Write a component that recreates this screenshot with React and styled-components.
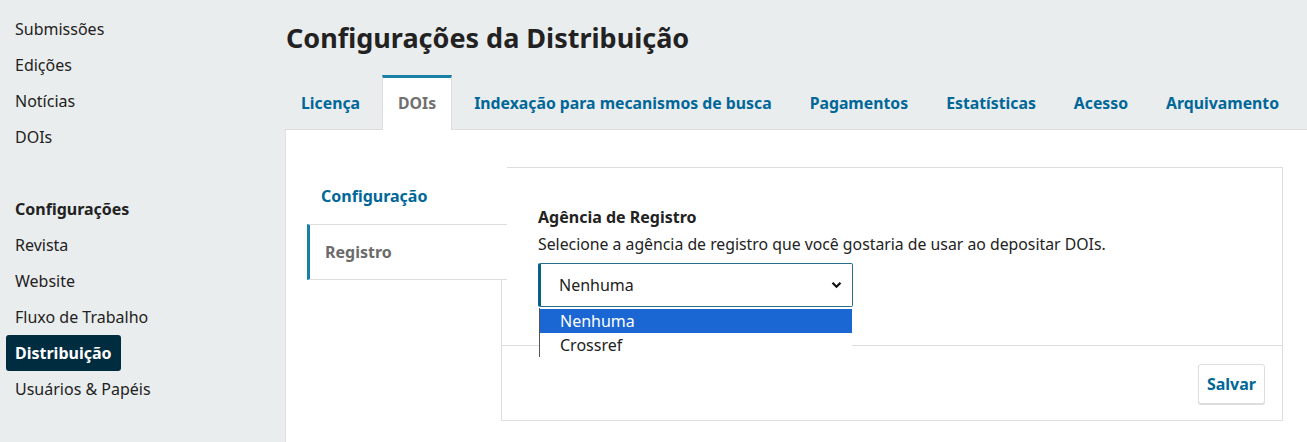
import React from "react";
import styled, { createGlobalStyle } from "styled-components";

const GlobalStyle = createGlobalStyle`
  * { box-sizing: border-box; }
  html, body { margin: 0; padding: 0; }
  body {
    font-family: "Noto Sans", "Open Sans", sans-serif;
    background: #eaedee;
    color: #222;
    overflow: hidden;
  }
`;

const Page = styled.div`
  display: flex;
  width: 1307px;
  height: 442px;
  background: #eaedee;
`;

const Sidebar = styled.nav`
  width: 285px;
  flex: none;
  padding-top: 11px;
  display: flex;
  flex-direction: column;
`;

const SideGroup = styled.div`
  display: flex;
  flex-direction: column;
  align-items: flex-start;
  margin-bottom: ${(p) => (p.$gap ? "36px" : "0")};
`;

const SideItem = styled.a`
  display: block;
  height: 36px;
  line-height: 36px;
  margin-left: 6px;
  padding: 0 9px;
  font-size: 16px;
  font-weight: ${(p) => (p.$bold || p.$active ? 700 : 400)};
  color: ${(p) => (p.$active ? "#fff" : "#222")};
  background: ${(p) => (p.$active ? "#002c40" : "transparent")};
  border-radius: 3px;
  text-decoration: none;
`;

const Main = styled.main`
  flex: 1;
  display: flex;
  flex-direction: column;
  min-width: 0;
`;

const Title = styled.h1`
  margin: 0;
  padding: 21px 0 0 1px;
  height: 75px;
  font-size: 27px;
  font-weight: 700;
  line-height: 34px;
  color: #222;
`;

const Tabs = styled.div`
  display: flex;
  gap: 6px;
  height: 55px;
  align-items: stretch;
  border-bottom: 1px solid #dddddd;
  position: relative;
`;

const Tab = styled.button`
  all: unset;
  flex: none;
  white-space: nowrap;
  display: flex;
  align-items: center;
  padding: 0 15px 3px;
  font-family: "Noto Sans", sans-serif;
  font-size: 15.8px;
  font-weight: 700;
  color: ${(p) => (p.$active ? "#707070" : "#006798")};
  background: ${(p) => (p.$active ? "#fff" : "transparent")};
  border-top: 3px solid ${(p) => (p.$active ? "#1a7fa6" : "transparent")};
  border-left: 1px solid ${(p) => (p.$active ? "#dddddd" : "transparent")};
  border-right: 1px solid ${(p) => (p.$active ? "#dddddd" : "transparent")};
  margin-bottom: -1px;
  cursor: pointer;
`;

const Content = styled.section`
  flex: 1;
  background: #fff;
  border-left: 1px solid #e0e0e0;
  display: flex;
  align-items: flex-start;
  padding: 37px 24px 0 21px;
`;

const SideTabs = styled.div`
  width: 200px;
  flex: none;
  display: flex;
  flex-direction: column;
  position: relative;
  z-index: 1;
`;

const SideTab = styled.div`
  height: ${(p) => (p.$active ? "56px" : "57px")};
  display: flex;
  align-items: center;
  padding-left: ${(p) => (p.$active ? "15px" : "11px")};
  font-size: 16px;
  font-weight: 700;
  color: ${(p) => (p.$active ? "#6b6b6b" : "#006798")};
  background: #fff;
  border-left: 3px solid ${(p) => (p.$active ? "#1a7fa6" : "transparent")};
  border-top: 1px solid ${(p) => (p.$active ? "#dddddd" : "transparent")};
  border-bottom: 1px solid ${(p) => (p.$active ? "#dddddd" : "transparent")};
`;

const Panel = styled.div`
  flex: 1;
  margin-left: -6px;
  height: 254px;
  border: 1px solid #dddddd;
  display: flex;
  flex-direction: column;
`;

const PanelBody = styled.div`
  height: 178px;
  padding: 37px 36px 0;
  border-bottom: 1px solid #dddddd;
  position: relative;
`;

const Label = styled.div`
  font-size: 16px;
  font-weight: 700;
  line-height: 24px;
  color: #222;
`;

const Description = styled.div`
  font-size: 15.8px;
  line-height: 24px;
  color: #222;
  margin-top: 3px;
`;

const SelectWrap = styled.div`
  position: relative;
  width: 315px;
  margin-top: 7px;
`;

const SelectBox = styled.div`
  height: 44px;
  border: 1px solid #2a6d8c;
  border-left: 3px solid #0a5f85;
  border-radius: 2px;
  display: flex;
  align-items: center;
  justify-content: space-between;
  padding: 0 10px 0 18px;
  font-size: 16px;
  color: #222;
`;

const Options = styled.ul`
  position: absolute;
  left: 1px;
  top: 45px;
  width: 313px;
  margin: 0;
  padding: 1px 0 0;
  list-style: none;
  background: #fff;
  border-left: 1px solid #555;
  z-index: 5;
`;

const Option = styled.li`
  height: 24px;
  line-height: 24px;
  padding-left: 20px;
  font-size: 16px;
  color: ${(p) => (p.$selected ? "#fff" : "#222")};
  background: ${(p) => (p.$selected ? "#1a66d2" : "#fff")};
`;

const Footer = styled.div`
  flex: 1;
  display: flex;
  justify-content: flex-end;
  align-items: flex-start;
  padding: 18px 17px 0 0;
`;

const Button = styled.button`
  all: unset;
  height: 38px;
  padding: 0 8px;
  display: flex;
  align-items: center;
  border: 1px solid #dddddd;
  border-radius: 3px;
  box-shadow: 0 1px 0 #dddddd;
  font-family: "Noto Sans", sans-serif;
  font-size: 16px;
  font-weight: 700;
  color: #006798;
  background: #fff;
  cursor: pointer;
`;

const Chevron = () => (
  <svg width="11" height="8" viewBox="0 0 11 8" aria-hidden="true">
    <path d="M1.5 1.8 L5.5 5.8 L9.5 1.8" fill="none" stroke="#111" strokeWidth="2.2" />
  </svg>
);

const tabs = [
  "Licença",
  "DOIs",
  "Indexação para mecanismos de busca",
  "Pagamentos",
  "Estatísticas",
  "Acesso",
  "Arquivamento",
];

export default function App() {
  return (
    <>
      <GlobalStyle />
      <Page>
        <Sidebar>
          <SideGroup $gap>
            <SideItem>Submissões</SideItem>
            <SideItem>Edições</SideItem>
            <SideItem>Notícias</SideItem>
            <SideItem>DOIs</SideItem>
          </SideGroup>
          <SideGroup>
            <SideItem $bold>Configurações</SideItem>
            <SideItem>Revista</SideItem>
            <SideItem>Website</SideItem>
            <SideItem>Fluxo de Trabalho</SideItem>
            <SideItem $active>Distribuição</SideItem>
            <SideItem>Usuários &amp; Papéis</SideItem>
          </SideGroup>
        </Sidebar>
        <Main>
          <Title>Configurações da Distribuição</Title>
          <Tabs>
            {tabs.map((t) => (
              <Tab key={t} $active={t === "DOIs"}>
                {t}
              </Tab>
            ))}
          </Tabs>
          <Content>
            <SideTabs>
              <SideTab>Configuração</SideTab>
              <SideTab $active>Registro</SideTab>
            </SideTabs>
            <Panel>
              <PanelBody>
                <Label>Agência de Registro</Label>
                <Description>
                  Selecione a agência de registro que você gostaria de usar ao depositar DOIs.
                </Description>
                <SelectWrap>
                  <SelectBox>
                    <span>Nenhuma</span>
                    <Chevron />
                  </SelectBox>
                  <Options>
                    <Option $selected>Nenhuma</Option>
                    <Option>Crossref</Option>
                  </Options>
                </SelectWrap>
              </PanelBody>
              <Footer>
                <Button>Salvar</Button>
              </Footer>
            </Panel>
          </Content>
        </Main>
      </Page>
    </>
  );
}
